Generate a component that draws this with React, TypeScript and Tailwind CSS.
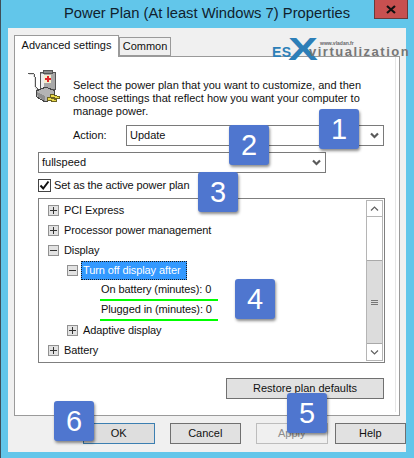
import React from "react";

const FONT = "font-['Liberation_Sans','Noto_Sans',sans-serif]";

function Expander({ open }: { open?: boolean }) {
  return (
    <span className="relative w-[9px] h-[9px] box-content border border-[#919191] bg-[#e2e2e2] shrink-0 flex items-center justify-center">
      <span className="w-[7px] h-px bg-[#333]" />
      {!open && <span className="absolute left-[4px] top-[1px] w-px h-[7px] bg-[#333]" />}
    </span>
  );
}

function Row({ level, exp, label, selected, line }: { level: 0 | 1 | 2; exp?: "plus" | "minus"; label: string; selected?: boolean; line?: boolean }) {
  const pad = level === 0 ? "pl-[9px]" : level === 1 ? "pl-[28px]" : "pl-[61px]";
  return (
    <div className={`h-[20px] flex items-center ${pad}`}>
      {exp && <Expander open={exp === "minus"} />}
      {exp && <span className={selected ? "w-[3px]" : "w-[5px]"} />}
      {selected ? (
        <span className="h-[19px] w-[106px] bg-[#3399ff] text-white border border-dotted border-[#1b1b1b] pl-px leading-[17px] whitespace-nowrap">{label}</span>
      ) : line ? (
        <span className="self-start w-[118px] h-[21px] leading-[19px] pl-[1px] border-b-[2px] border-[#00ff00] whitespace-nowrap">{label}</span>
      ) : (
        <span className="whitespace-nowrap">{label}</span>
      )}
    </div>
  );
}

function Chevron({ up, thick }: { up?: boolean; thick?: boolean }) {
  return (
    <svg width="9" height="7" viewBox="0 0 9 7" className="block">
      <polyline
        points={up ? "1,5.5 4.5,2 8,5.5" : "1,1.5 4.5,5 8,1.5"}
        fill="none"
        stroke={thick ? "#5a5a5a" : "#606060"}
        strokeWidth={thick ? 2.2 : 1.2}
      />
    </svg>
  );
}

function Combo({ text, className }: { text: string; className: string }) {
  return (
    <div className={`h-[21px] border border-[#7a7a7a] bg-white flex items-center pl-[3px] pr-[4px] justify-between ${className}`}>
      <span>{text}</span>
      <Chevron thick />
    </div>
  );
}

function Btn({ label, className = "" }: { label: string; className?: string }) {
  return (
    <div className={`h-[21px] w-[73px] border flex items-center justify-center ${className}`}>{label}</div>
  );
}

function Badge({ n, className }: { n: number; className: string }) {
  return (
    <div className={`absolute w-[40px] h-[40px] rounded-[3px] bg-[#4f76cf] text-white text-[29px] leading-none flex items-center justify-center font-['Liberation_Sans',sans-serif] shadow-[1px_2px_3px_rgba(0,0,0,0.45)] ${className}`}>
      {n}
    </div>
  );
}

function PowerIcon() {
  return (
    <svg width="36" height="34" viewBox="0 0 36 34" className="block" shapeRendering="crispEdges">
      <path d="M2 4 H6 Q9 4 9 8 V17 L13 22" fill="none" stroke="#555" strokeWidth="1" />
      <path d="M3 5 H6 Q8 5 8 8 V17 L12 22" fill="none" stroke="#ddd" strokeWidth="1" />
      <rect x="14" y="3" width="15" height="17" fill="#a8a8a8" stroke="#555" />
      <rect x="17" y="1" width="9" height="3" fill="#888" stroke="#555" />
      <rect x="15" y="5" width="3" height="14" fill="#ececec" />
      <rect x="18" y="6" width="7" height="8" fill="#f3eecb" />
      <rect x="21" y="7" width="1.5" height="6" fill="#e0242a" />
      <rect x="19" y="9" width="6" height="1.5" fill="#e0242a" />
      <polygon points="10,22 20,18 29,22 27,30 19,33 11,28" fill="#b4b4b4" stroke="#444" />
      <polygon points="11,23 19,27 19,32 12,28" fill="#8e8e8e" />
      <polygon points="25,25 34,28 33,30 24,28" fill="#e9d94a" stroke="#6c6320" />
      <polygon points="22,28 31,31 30,33 21,31" fill="#e9d94a" stroke="#6c6320" />
    </svg>
  );
}

export default function App() {
  return (
    <div className={`relative w-[414px] h-[458px] overflow-hidden bg-[#62c6ea] border-l border-[#3f4e58] text-[11px] text-[#111] ${FONT}`}>
      <div className="h-[28px] flex justify-center items-center pr-[1px]">
        <span className="text-[14.75px] text-[#10222e] leading-[26px] pb-[2px]">Power Plan (At least Windows 7) Properties</span>
      </div>
      <div className="absolute right-[6px] top-0 w-[34px] h-[19px] bg-[#c75050] border border-t-0 border-[#6a3a3a] flex items-center justify-center">
        <svg width="10" height="9" viewBox="0 0 10 9">
          <path d="M1 1 L9 8 M9 1 L1 8" stroke="#111" strokeWidth="2.2" />
        </svg>
      </div>

      <div className="ml-[7px] w-[398px] h-[424px] bg-[#f0f0f0] pt-[7px] pl-[6px]">
        <div className="flex items-start h-[21px] relative z-10">
          <div className="w-[105px] h-[22px] bg-white border border-b-0 border-[#9a9a9a] flex items-center justify-center pb-[3px]">Advanced settings</div>
          <div className="w-[52px] h-[19px] mt-[2px] bg-[#f0f0f0] border border-[#9a9a9a] flex items-center justify-center">Common</div>
        </div>
        <div className="w-[386px] h-[360px] border border-[#9a9a9a] bg-white pr-[3px] pb-[3px]">
          <div className="h-full border-r border-[#e6e6e6] relative">
            <div className="flex pt-[10px] pl-[11px] h-[68px]">
              <div className="w-[47px] shrink-0 pt-[2px]"><PowerIcon /></div>
              <p className="leading-[13px] pt-[12px] w-[305px]">
                Select the power plan that you want to customize, and then choose settings that reflect how you want your computer to manage power.
              </p>
            </div>
            <div className="flex items-center h-[21px] pl-[58px] mt-0">
              <span className="w-[53px]">Action:</span>
              <Combo text="Update" className="w-[258px]" />
            </div>
            <div className="pl-[23px] mt-[6px]">
              <Combo text="fullspeed" className="w-[288px]" />
            </div>
            <div className="flex items-center pl-[23px] mt-[6px] h-[13px]">
              <span className="w-[13px] h-[13px] border border-[#444] bg-white flex items-center justify-center shrink-0">
                <svg width="11" height="11" viewBox="0 0 11 11">
                  <path d="M1.5 5.5 L4.2 8.5 L9.5 1.5" fill="none" stroke="#111" strokeWidth="2" />
                </svg>
              </span>
              <span className="ml-[3px] tracking-[-0.1px]">Set as the active power plan</span>
            </div>
            <div className="ml-[23px] mt-[6px] w-[347px] h-[165px] border border-[#7f7f7f] bg-white flex">
              <div className="flex-1 pt-[1px] tracking-[-0.1px]">
                <Row level={0} exp="plus" label="PCI Express" />
                <Row level={0} exp="plus" label="Processor power management" />
                <Row level={0} exp="minus" label="Display" />
                <Row level={1} exp="minus" label="Turn off display after" selected />
                <Row level={2} label="On battery (minutes): 0" line />
                <Row level={2} label="Plugged in (minutes): 0" line />
                <Row level={1} exp="plus" label="Adaptive display" />
                <Row level={0} exp="plus" label="Battery" />
              </div>
              <div className="w-[17px] mr-[1px] my-[1px] border border-[#b5b5b5] flex flex-col">
                <div className="h-[16px] border-b border-[#b5b5b5] flex items-center justify-center"><Chevron up /></div>
                <div className="h-[43px]" />
                <div className="flex-1 bg-[#dcdcdc] border-y border-[#a9a9a9] flex flex-col items-center justify-center gap-[1px]">
                  <span className="w-[7px] h-px bg-[#777]" />
                  <span className="w-[7px] h-px bg-[#777]" />
                  <span className="w-[7px] h-px bg-[#777]" />
                </div>
                <div className="h-[16px] flex items-center justify-center"><Chevron /></div>
              </div>
            </div>
            <div className="ml-[211px] mt-[15px] w-[158px] h-[21px] border border-[#707070] bg-[#e1e1e1] flex items-center justify-center">Restore plan defaults</div>
          </div>
        </div>
        <div className="flex gap-[7px] pl-[69px] mt-[7px]">
          <Btn label="OK" className="border-[#3c7fb1] bg-[#dedede]" />
          <span className="w-px" />
          <Btn label="Cancel" className="border-[#707070] bg-[#e1e1e1]" />
          <span className="w-px" />
          <Btn label="Apply" className="border-[#bdbdbd] bg-[#f0f0f0] text-[#8d8d8d]" />
          <Btn label="Help" className="border-[#707070] bg-[#e1e1e1]" />
        </div>
      </div>

      <div className="absolute left-[271px] top-[36px] w-[142px] h-[26px] pointer-events-none font-['Liberation_Sans',sans-serif]">
        <span className="absolute left-0 top-[9px] text-[14px] leading-[14px] font-bold tracking-[0.5px] text-[#2d7fb8]">ES</span>
        <span className="absolute left-[16px] top-[-2px] text-[32px] leading-[30px] font-bold text-[#2d7fb8] origin-left scale-x-[1.4]">X</span>
        <span className="absolute left-[48px] top-[4px] text-[5px] leading-[6px] font-bold text-[#666]">www.vladan.fr</span>
        <span className="absolute left-[37px] top-[9px] text-[13px] leading-[14px] font-bold tracking-[1.5px] text-[#777] whitespace-nowrap">virtualization</span>
      </div>

      <Badge n={1} className="left-[318px] top-[109px]" />
      <Badge n={2} className="left-[228px] top-[125px]" />
      <Badge n={3} className="left-[197px] top-[172px]" />
      <Badge n={4} className="left-[234px] top-[279px]" />
      <Badge n={5} className="left-[286px] top-[393px]" />
      <Badge n={6} className="left-[53px] top-[401px]" />
    </div>
  );
}
